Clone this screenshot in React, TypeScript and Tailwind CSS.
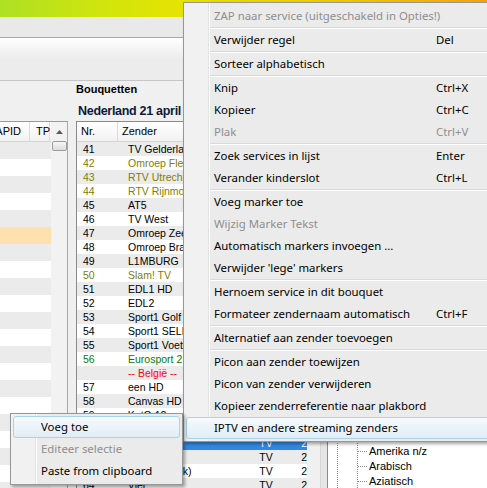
const listFont = "font-['Liberation_Sans',sans-serif] text-[10.5px]";
const menuFont = "font-['Noto_Sans',sans-serif] text-[11.4px]";

type Row = { nr: string; name: string; color: string; type?: string };

const channels: Row[] = [
  { nr: "41", name: "TV Gelderland", color: "text-black" },
  { nr: "42", name: "Omroep Flevoland", color: "text-[#808000]" },
  { nr: "43", name: "RTV Utrecht", color: "text-[#808000]" },
  { nr: "44", name: "RTV Rijnmond", color: "text-[#808000]" },
  { nr: "45", name: "AT5", color: "text-black" },
  { nr: "46", name: "TV West", color: "text-black" },
  { nr: "47", name: "Omroep Zeeland", color: "text-black" },
  { nr: "48", name: "Omroep Brabant", color: "text-black" },
  { nr: "49", name: "L1MBURG", color: "text-black" },
  { nr: "50", name: "Slam! TV", color: "text-[#808000]" },
  { nr: "51", name: "EDL1 HD", color: "text-black" },
  { nr: "52", name: "EDL2", color: "text-black" },
  { nr: "53", name: "Sport1 Golf", color: "text-black" },
  { nr: "54", name: "Sport1 SELECT", color: "text-black" },
  { nr: "55", name: "Sport1 Voetbal", color: "text-black" },
  { nr: "56", name: "Eurosport 2", color: "text-[#008000]" },
  { nr: "", name: "-- België --", color: "text-[#ff0000]" },
  { nr: "57", name: "een HD", color: "text-black" },
  { nr: "58", name: "Canvas HD", color: "text-black" },
  { nr: "59", name: "KetG 12", color: "text-black", type: "TV" },
  { nr: "60", name: "VTM HD", color: "text-black", type: "TV" },
  { nr: "61", name: "2BE", color: "text-white", type: "TV" },
  { nr: "62", name: "Vitaya", color: "text-black", type: "TV" },
  { nr: "63", name: "VTM (tijdelijk)", color: "text-black", type: "TV" },
  { nr: "64", name: "Vier", color: "text-black", type: "TV" },
];

type Item = { label: string; key?: string; off?: boolean; sep?: boolean; hot?: boolean };

const menuItems: Item[] = [
  { label: "ZAP naar service (uitgeschakeld in Opties!)", off: true, sep: true },
  { label: "Verwijder regel", key: "Del", sep: true },
  { label: "Sorteer alphabetisch", sep: true },
  { label: "Knip", key: "Ctrl+X" },
  { label: "Kopieer", key: "Ctrl+C" },
  { label: "Plak", key: "Ctrl+V", off: true, sep: true },
  { label: "Zoek services in lijst", key: "Enter" },
  { label: "Verander kinderslot", key: "Ctrl+L", sep: true },
  { label: "Voeg marker toe" },
  { label: "Wijzig Marker Tekst", off: true },
  { label: "Automatisch markers invoegen ..." },
  { label: "Verwijder 'lege' markers", sep: true },
  { label: "Hernoem service in dit bouquet" },
  { label: "Formateer zendernaam automatisch", key: "Ctrl+F", sep: true },
  { label: "Alternatief aan zender toevoegen", sep: true },
  { label: "Picon aan zender toewijzen" },
  { label: "Picon van zender verwijderen" },
  { label: "Kopieer zenderreferentie naar plakbord" },
  { label: "IPTV en andere streaming zenders", hot: true },
];

const subItems: Item[] = [
  { label: "Voeg toe", hot: true },
  { label: "Editeer selectie", off: true },
  { label: "Paste from clipboard" },
];

const menuBg =
  "bg-[linear-gradient(to_right,#f1f1f1_24px,#e2e3e3_24px,#e2e3e3_25px,#ffffff_25px,#ffffff_26px,#ebebeb_26px)]";

const MenuRow = ({ item }: { item: Item }) => (
  <>
    <div
      className={`flex h-[22px] items-center whitespace-nowrap rounded-[3px] border pl-[27px] ${
        item.hot
          ? "border-[#aad4ec] bg-gradient-to-b from-[#f5fafd] to-[#e1edf6]"
          : "border-transparent"
      } ${item.off ? "text-[#8e8e8e]" : "text-black"}`}
    >
      <span className="w-[222px] shrink-0">{item.label}</span>
      {item.key && <span>{item.key}</span>}
    </div>
    {item.sep && <div className="ml-[24px] h-[2px] border-t border-b border-t-[#d9d9d9] border-b-white" />}
  </>
);

const LeftList = () => (
  <div className="flex w-[68px] shrink-0 flex-col">
    <div className="h-[40px] shrink-0" />
    <div className="flex min-h-0 flex-1 border-t border-[#9a9a9a]">
      <div className="flex w-[51px] flex-col overflow-hidden">
        <div className={`flex h-[20px] shrink-0 items-center border-b border-[#d5d5d5] bg-gradient-to-b from-white to-[#f2f2f2] ${listFont} text-[11px]`}>
          <div className="flex h-full w-[30px] shrink-0 items-center justify-end border-r border-[#dcdcdc] pr-[8px]">APID</div>
          <div className="flex h-full w-[20px] shrink-0 items-center border-r border-[#dcdcdc] pl-[6px]">TP</div>
        </div>
        {Array.from({ length: 21 }).map((_, i) => (
          <div
            key={i}
            className={`h-[17px] shrink-0 ${
              i === 5 ? "bg-[#ffe0ae]" : i % 2 === 0 ? "bg-[#ebebeb]" : "bg-white"
            }`}
          />
        ))}
      </div>
      <div className="flex w-[17px] flex-col items-center border-r border-[#a8a8a8] bg-[#f2f2f2]">
        <div className="flex h-[19px] shrink-0 items-center">
          <svg width="7" height="4" viewBox="0 0 7 4">
            <path d="M0 4 L3.5 0 L7 4 Z" fill="#5a5a5a" />
          </svg>
        </div>
        <div className="h-[10px] w-[15px] shrink-0 rounded-[2px] border border-[#9c9c9c] bg-gradient-to-b from-[#f7f7f7] to-[#dcdcdc]" />
      </div>
    </div>
  </div>
);

const MiddleList = () => (
  <div className="ml-[8px] flex w-[231px] shrink-0 flex-col">
    <div className="h-[17px] shrink-0 font-['Liberation_Sans',sans-serif] text-[11px] font-bold leading-[17px] text-black">
      Bouquetten
    </div>
    <div className="h-[23px] shrink-0 whitespace-nowrap pl-[2px] pt-[5px] font-['Liberation_Sans',sans-serif] text-[12.5px] font-bold leading-[16px] tracking-[-0.3px] text-[#0d1a3c]">
      Nederland 21 april 2014
    </div>
    <div className={`flex min-h-0 flex-1 flex-col overflow-hidden border-l border-t border-[#8a8a8a] bg-white ${listFont}`}>
      <div className="flex h-[20px] shrink-0 items-center border-b border-[#d5d5d5] bg-gradient-to-b from-white to-[#f2f2f2] text-[11px]">
        <div className="flex h-full w-[43px] items-center border-r border-[#dcdcdc] pl-[4px]">Nr.</div>
        <div className="flex h-full w-[132px] items-center border-r border-[#dcdcdc] pl-[4px]">Zender</div>
        <div className="flex h-full w-[43px] items-center border-r border-[#dcdcdc] pl-[4px]">Type</div>
        <div className="flex h-full flex-1 items-center pl-[4px]">Pos</div>
      </div>
      {channels.map((r, i) => (
        <div
          key={i}
          className={`flex h-[14px] shrink-0 items-center leading-[14px] ${r.color} ${
            r.nr === "61" ? "bg-[#3288e0]" : i % 2 === 0 ? "bg-[#ebebeb]" : "bg-white"
          }`}
        >
          <div className="w-[44px] pl-[6px]">{r.nr}</div>
          <div className="w-[132px] whitespace-nowrap pl-[7px]">{r.name}</div>
          <div className="w-[43px] pl-[7px]">{r.type}</div>
          <div className="flex-1 pl-[6px]">{r.type ? "2" : ""}</div>
        </div>
      ))}
    </div>
  </div>
);

const Tree = () => (
  <div className="flex min-w-0 flex-1 flex-col">
    <div className="h-[40px] shrink-0" />
    <div className="flex min-h-0 flex-1 overflow-hidden border-l border-t border-[#8a8a8a] bg-white">
      <div className="ml-[9px] border-l border-dotted border-[#8c8c8c]" />
      <div className="ml-[19px] flex flex-col border-l border-dotted border-[#8c8c8c]">
        <div className="h-[322px] shrink-0" />
        {["Amerika n/z", "Arabisch", "Aziatisch", "Belgisch"].map((t) => (
          <div key={t} className={`flex h-[15px] shrink-0 items-center ${listFont} text-[11px]`}>
            <span className="w-[9px] border-t border-dotted border-[#8c8c8c]" />
            <span className="whitespace-nowrap pl-[2px]">{t}</span>
          </div>
        ))}
      </div>
    </div>
  </div>
);

export default function App() {
  return (
    <div className="relative h-[488px] w-[487px] overflow-hidden bg-[#f0f0f0]">
      <div className="h-[17px] bg-[linear-gradient(to_right,#ade023_0%,#d2e50c_22%,#e6e300_38%,#efc80a_70%,#f2a512_100%)]" />
      <div className="h-[21px] border-b border-[#a6a6a6] bg-[#e9e9e9]" />
      <div className="h-[43px] border-b border-[#c6c6c6] bg-gradient-to-b from-white via-[#ececec] via-50% to-[#ececec]" />
      <div className="flex h-[407px]">
        <LeftList />
        <MiddleList />
        <div className="w-[13px] shrink-0" />
        <div className="w-[7px] shrink-0 border-l border-[#d6d6d6] bg-[#e6e6e6]" />
        <Tree />
      </div>

      <div
        className={`absolute left-[183px] top-[2px] w-[330px] border border-[#979797] p-[2px] shadow-[2px_2px_3px_rgba(0,0,0,0.35)] ${menuBg} ${menuFont}`}
      >
        {menuItems.map((it) => (
          <MenuRow key={it.label} item={it} />
        ))}
      </div>

      <div
        className={`absolute left-[10px] top-[413px] w-[173px] border border-[#979797] p-[2px] shadow-[2px_2px_3px_rgba(0,0,0,0.35)] ${menuBg} ${menuFont}`}
      >
        {subItems.map((it) => (
          <MenuRow key={it.label} item={it} />
        ))}
      </div>
    </div>
  );
}
